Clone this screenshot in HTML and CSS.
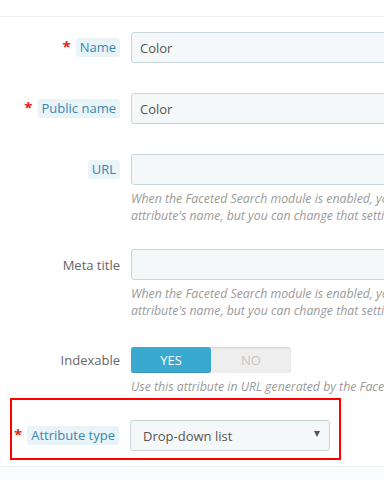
FILE: index.html
```html
<!DOCTYPE html>
<html lang="en">
<head>
  <meta charset="UTF-8">
  <meta name="viewport" content="width=device-width, initial-scale=1.0">
  <title>Attribute - Edit</title>
  <link rel="stylesheet" href="styles.css">
</head>
<body>
  <div class="panel">
    <div class="panel-heading"></div>

    <div class="panel-body">
      <!-- Name -->
      <div class="form-group">
        <div class="control-label"><span class="required">*</span><span class="label-tooltip">Name</span></div>
        <div class="control-field">
          <input class="form-input" type="text" value="Color">
        </div>
      </div>

      <!-- Public name -->
      <div class="form-group gap-30">
        <div class="control-label"><span class="required">*</span><span class="label-tooltip">Public name</span></div>
        <div class="control-field">
          <input class="form-input" type="text" value="Color">
        </div>
      </div>

      <!-- URL -->
      <div class="form-group gap-30">
        <div class="control-label"><span class="label-tooltip">URL</span></div>
        <div class="control-field">
          <input class="form-input" type="text" value="">
          <p class="help-block">When the Faceted Search module is enabled, you can get more detailed URLs by choosing the word that best represent this attribute. By default, PrestaShop uses the<br>attribute's name, but you can change that setting using this field.</p>
        </div>
      </div>

      <!-- Meta title -->
      <div class="form-group gap-25">
        <div class="control-label"><span class="label-plain">Meta title</span></div>
        <div class="control-field">
          <input class="form-input" type="text" value="">
          <p class="help-block">When the Faceted Search module is enabled, you can get more detailed page titles by choosing the word that best represent this attribute. By default, PrestaShop uses the<br>attribute's name, but you can change that setting using this field.</p>
        </div>
      </div>

      <!-- Indexable -->
      <div class="form-group gap-28">
        <div class="control-label toggle-label"><span class="label-plain">Indexable</span></div>
        <div class="control-field">
          <div class="switch">
            <span class="switch-option active">YES</span>
            <span class="switch-option">NO</span>
          </div>
          <p class="help-block">Use this attribute in URL generated by the Faceted Navigation module.</p>
        </div>
      </div>

      <!-- Attribute type (highlighted) -->
      <div class="highlight-box">
        <div class="form-group">
          <div class="control-label narrow"><span class="required">*</span><span class="label-tooltip">Attribute type</span></div>
          <div class="control-field">
            <div class="select-box">
              <span>Drop-down list</span>
              <span class="select-arrow"></span>
            </div>
          </div>
        </div>
      </div>
    </div>

    <div class="panel-footer"></div>
  </div>
</body>
</html>
```

FILE: styles.css
```css
/* Basic styles for the page */
html, body {
  overflow: hidden;
}

body {
  font-family: "Open Sans", Arial, sans-serif;
  font-size: 13px;
  color: #555;
  margin: 0;
  padding: 0;
  background-color: #fff;
}

.panel {
  width: 384px;
  height: 480px;
}

.panel-heading {
  height: 16px;
  border-bottom: 1px solid #eee;
}

.panel-body {
  padding-top: 15px;
}

.form-group {
  display: flex;
  align-items: flex-start;
}

.gap-30 {
  margin-top: 30px;
}

.gap-25 {
  margin-top: 25px;
}

.gap-28 {
  margin-top: 28px;
}

.control-label {
  width: 120px;
  flex-shrink: 0;
  height: 31px;
  padding-right: 11px;
  display: flex;
  align-items: center;
  justify-content: flex-end;
}

.control-label.narrow {
  width: 107px;
}

.toggle-label {
  height: 26px;
}

.required {
  color: #e8201c;
  font-size: 15px;
  font-weight: bold;
  margin-right: 5px;
  position: relative;
  top: -2px;
}

.label-tooltip {
  background-color: #e9f4f9;
  color: #3b87b0;
  padding: 0 4px;
  line-height: 19px;
  border-radius: 3px;
}

.label-plain {
  color: #666;
}

.control-field {
  flex-shrink: 0;
}

.form-input {
  box-sizing: border-box;
  width: 300px;
  height: 31px;
  padding: 0 8px;
  margin: 0;
  font-family: "Open Sans", Arial, sans-serif;
  font-size: 13px;
  color: #555;
  background-color: #f5f8f9;
  border: 1px solid #c7d6db;
  border-radius: 3px;
  display: block;
}

.help-block {
  margin: 5px 0 0;
  font-size: 12.3px;
  font-style: italic;
  line-height: 17px;
  color: #9a9a9a;
  white-space: nowrap;
}

.switch {
  display: flex;
  width: 160px;
  height: 26px;
  background-color: #eee;
  border-radius: 3px;
  box-shadow: inset 0 1px 2px rgba(0, 0, 0, 0.12);
}

.switch-option {
  width: 80px;
  text-align: center;
  line-height: 26px;
  color: #c6c6c6;
  font-size: 13px;
}

.switch-option.active {
  background-color: #3aa9d0;
  color: #fff;
  border-radius: 3px;
  box-shadow: inset 0 -1px 0 rgba(0, 0, 0, 0.1);
}

.highlight-box {
  width: 327px;
  margin: 3px 0 0 10px;
  border: 2px solid #f00;
  padding: 20px 0 7px;
}

.select-box {
  box-sizing: border-box;
  width: 200px;
  height: 31px;
  padding: 0 12px;
  display: flex;
  align-items: center;
  justify-content: space-between;
  color: #555;
  background-color: #f5f8f9;
  border: 1px solid #c7d6db;
  border-radius: 3px;
}

.select-arrow {
  width: 0;
  height: 0;
  margin-right: -3px;
  margin-top: -3px;
  border-left: 3px solid transparent;
  border-right: 3px solid transparent;
  border-top: 6px solid #555;
}

.panel-footer {
  margin-top: 6px;
  height: 30px;
  border-top: 1px solid #eef0f2;
  background-color: #fafbfc;
}
```
